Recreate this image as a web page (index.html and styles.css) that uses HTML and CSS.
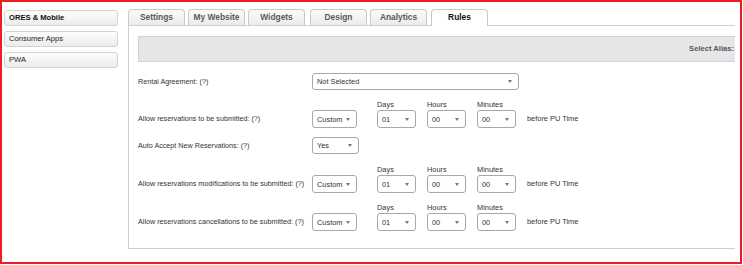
FILE: index.html
```html
<!DOCTYPE html>
<html lang="en">
<head>
  <meta charset="UTF-8" />
  <title>Rules</title>
  <link rel="stylesheet" href="styles.css">
</head>
<body>
  <div class="frame">
    <div class="sidebar">
      <div class="side-btn active">ORES &amp; Mobile</div>
      <div class="side-btn">Consumer Apps</div>
      <div class="side-btn">PWA</div>
    </div>

    <div class="main">
      <div class="tabs">
        <div class="tab">Settings</div>
        <div class="tab">My Website</div>
        <div class="tab">Widgets</div>
        <div class="tab">Design</div>
        <div class="tab">Analytics</div>
        <div class="tab current">Rules</div>
      </div>

      <div class="panel">
        <div class="alias-bar">Select Alias:</div>

        <div class="row r1">
          <div class="label">Rental Agreement: (?)</div>
          <div class="sel wide"><span>Not Selected</span><i class="arrow"></i></div>
        </div>

        <div class="row r2">
          <div class="label tall">Allow reservations to be submitted: (?)</div>
          <div class="sel tall w-custom"><span>Custom</span><i class="arrow"></i></div>
          <div class="group g-days"><div class="cap">Days</div><div class="sel tall w-small"><span>01</span><i class="arrow"></i></div></div>
          <div class="group"><div class="cap">Hours</div><div class="sel tall w-small"><span>00</span><i class="arrow"></i></div></div>
          <div class="group"><div class="cap">Minutes</div><div class="sel tall w-small"><span>00</span><i class="arrow"></i></div></div>
          <div class="after">before PU Time</div>
        </div>

        <div class="row r3">
          <div class="label">Auto Accept New Reservations: (?)</div>
          <div class="sel w-yes"><span>Yes</span><i class="arrow"></i></div>
        </div>

        <div class="row r4">
          <div class="label tall">Allow reservations modifications to be submitted: (?)</div>
          <div class="sel tall w-custom"><span>Custom</span><i class="arrow"></i></div>
          <div class="group g-days"><div class="cap">Days</div><div class="sel tall w-small"><span>01</span><i class="arrow"></i></div></div>
          <div class="group"><div class="cap">Hours</div><div class="sel tall w-small"><span>00</span><i class="arrow"></i></div></div>
          <div class="group"><div class="cap">Minutes</div><div class="sel tall w-small"><span>00</span><i class="arrow"></i></div></div>
          <div class="after">before PU Time</div>
        </div>

        <div class="row r5">
          <div class="label tall">Allow reservations cancellations to be submitted: (?)</div>
          <div class="sel tall w-custom"><span>Custom</span><i class="arrow"></i></div>
          <div class="group g-days"><div class="cap">Days</div><div class="sel tall w-small"><span>01</span><i class="arrow"></i></div></div>
          <div class="group"><div class="cap">Hours</div><div class="sel tall w-small"><span>00</span><i class="arrow"></i></div></div>
          <div class="group"><div class="cap">Minutes</div><div class="sel tall w-small"><span>00</span><i class="arrow"></i></div></div>
          <div class="after">before PU Time</div>
        </div>
      </div>
    </div>
  </div>
</body>
</html>
```

FILE: styles.css
```css
body {
  margin: 0;
  background: #ffffff;
  font-family: 'Liberation Sans', Arial, sans-serif;
  color: #333;
}

.frame {
  width: 738px;
  height: 260px;
  border: 2px solid #ee1c25;
  display: flex;
  align-items: flex-start;
}

/* left menu */
.sidebar {
  width: 114px;
  margin-left: 2px;
  margin-top: 8px;
  display: flex;
  flex-direction: column;
  gap: 5px;
}

.side-btn {
  height: 14px;
  line-height: 14px;
  padding-left: 4px;
  font-size: 7.6px;
  color: #222;
  border: 1px solid #d3d3d3;
  border-radius: 3px;
  background: linear-gradient(#fdfdfd, #ececec);
}

.side-btn.active {
  font-weight: 700;
  color: #111;
}

/* tabs + panel */
.main {
  margin-left: 10px;
  margin-top: 7px;
  width: 607px;
}

.tabs {
  display: flex;
  gap: 3px;
  height: 16px;
}

.tab {
  width: 55px;
  height: 15px;
  line-height: 15px;
  text-align: center;
  font-size: 8.4px;
  font-weight: 700;
  color: #5a5a5a;
  border: 1px solid #c9c9c9;
  border-bottom: none;
  border-radius: 4px 4px 0 0;
  background: linear-gradient(#fbfbfb, #ebebeb);
}

.tab:nth-child(4) {
  margin-left: 2px;
}

.tab:nth-child(6) {
  margin-left: 1px;
}

.tab.current {
  position: relative;
  height: 16px;
  background: #ffffff;
  color: #111;
}

.panel {
  border-top: 1px solid #cfcfcf;
  border-left: 1px solid #cfcfcf;
  border-bottom: 1px solid #cfcfcf;
  padding-left: 9px;
  padding-top: 10px;
  height: 212px;
}

.alias-bar {
  height: 24px;
  line-height: 24px;
  border: 1px solid #d5d2d5;
  border-right: none;
  background: #e8e5e8;
  text-align: right;
  padding-right: 1px;
  font-size: 7.6px;
  font-weight: 700;
  color: #555;
}

/* form rows */
.row {
  display: flex;
  align-items: flex-end;
}

.r1 { margin-top: 11px; }
.r2 { margin-top: 9px; }
.r3 { margin-top: 9px; }
.r4 { margin-top: 10px; }
.r5 { margin-top: 9px; }

.label {
  width: 174px;
  height: 17px;
  line-height: 17px;
  font-size: 7.2px;
  color: #333;
  white-space: nowrap;
}

.label.tall {
  height: 18px;
  line-height: 18px;
}

.sel {
  box-sizing: border-box;
  height: 17px;
  padding: 0 6px 0 4px;
  border: 1px solid #a8a8a8;
  border-radius: 3px;
  background: #fff;
  display: flex;
  align-items: center;
  justify-content: space-between;
  font-size: 7.4px;
  color: #333;
}

.sel.tall {
  height: 18px;
}

.arrow {
  width: 0;
  height: 0;
  border-left: 2px solid transparent;
  border-right: 2px solid transparent;
  border-top: 3px solid #777;
}

.wide { width: 207px; }
.w-custom { width: 45px; }
.w-yes { width: 47px; }
.w-small { width: 39px; }

.group {
  margin-left: 11px;
}

.group.g-days {
  margin-left: 20px;
}

.cap {
  height: 11px;
  line-height: 11px;
  font-size: 7.4px;
  color: #333;
}

.after {
  margin-left: 11px;
  height: 18px;
  line-height: 18px;
  font-size: 7.4px;
  color: #333;
}
```
